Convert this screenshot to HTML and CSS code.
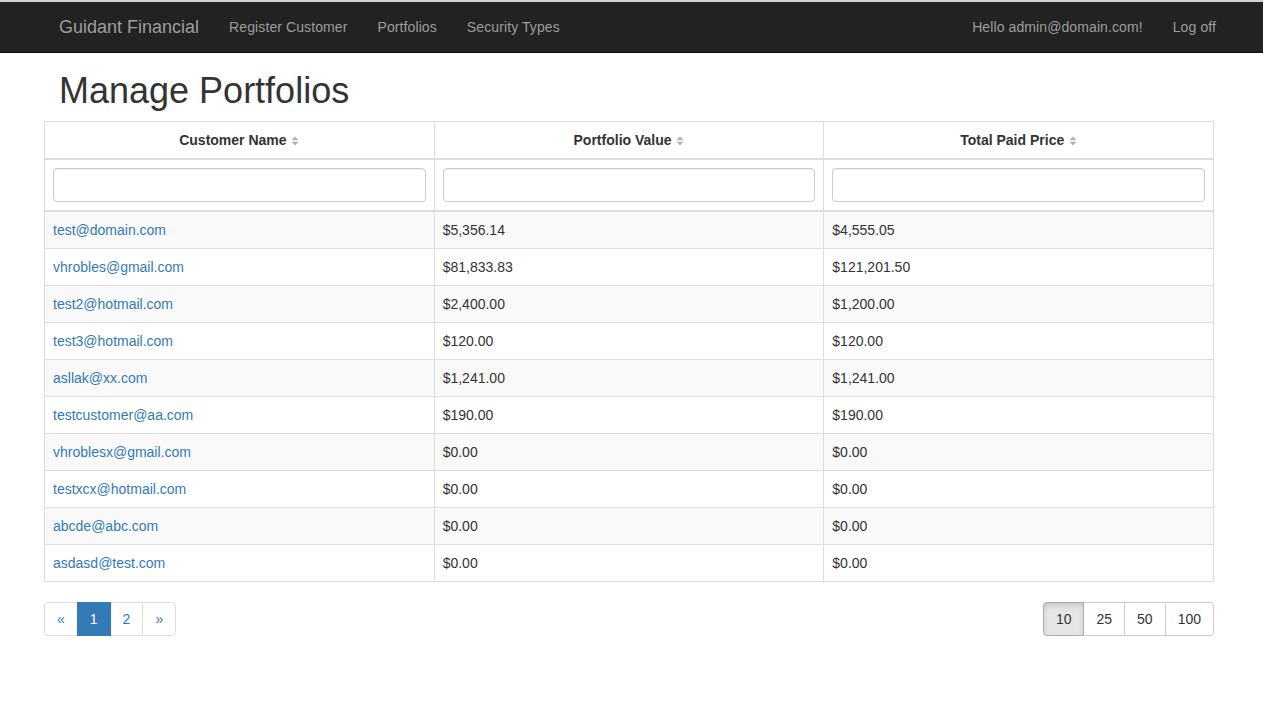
FILE: index.html
```html
<!DOCTYPE html>
<html>
<head>
<meta charset="utf-8">
<title>Manage Portfolios</title>
<link rel="stylesheet" href="styles.css">
</head>
<body>
<nav class="navbar">
  <div class="nav-left">
    <a class="brand" href="#">Guidant Financial</a>
    <a class="nav-link" href="#">Register Customer</a>
    <a class="nav-link" href="#">Portfolios</a>
    <a class="nav-link" href="#">Security Types</a>
  </div>
  <div class="nav-right">
    <a class="nav-link" href="#">Hello admin@domain.com!</a>
    <a class="nav-link" href="#">Log off</a>
  </div>
</nav>
<main class="container">
  <h1 class="title">Manage Portfolios</h1>
  <table class="grid">
    <thead>
      <tr>
        <th>Customer Name <svg class="sort" width="8" height="10" viewBox="0 0 8 10"><path d="M4 0.5 L7.5 4.2 L0.5 4.2 Z M4 9.5 L7.5 5.8 L0.5 5.8 Z" fill="#b3b3b3"/></svg></th>
        <th>Portfolio Value <svg class="sort" width="8" height="10" viewBox="0 0 8 10"><path d="M4 0.5 L7.5 4.2 L0.5 4.2 Z M4 9.5 L7.5 5.8 L0.5 5.8 Z" fill="#b3b3b3"/></svg></th>
        <th>Total Paid Price <svg class="sort" width="8" height="10" viewBox="0 0 8 10"><path d="M4 0.5 L7.5 4.2 L0.5 4.2 Z M4 9.5 L7.5 5.8 L0.5 5.8 Z" fill="#b3b3b3"/></svg></th>
      </tr>
      <tr class="filters">
        <td><input class="form-control" type="text"></td>
        <td><input class="form-control" type="text"></td>
        <td><input class="form-control" type="text"></td>
      </tr>
    </thead>
    <tbody>
      <tr><td><a href="#">test@domain.com</a></td><td>$5,356.14</td><td>$4,555.05</td></tr>
      <tr><td><a href="#">vhrobles@gmail.com</a></td><td>$81,833.83</td><td>$121,201.50</td></tr>
      <tr><td><a href="#">test2@hotmail.com</a></td><td>$2,400.00</td><td>$1,200.00</td></tr>
      <tr><td><a href="#">test3@hotmail.com</a></td><td>$120.00</td><td>$120.00</td></tr>
      <tr><td><a href="#">asllak@xx.com</a></td><td>$1,241.00</td><td>$1,241.00</td></tr>
      <tr><td><a href="#">testcustomer@aa.com</a></td><td>$190.00</td><td>$190.00</td></tr>
      <tr><td><a href="#">vhroblesx@gmail.com</a></td><td>$0.00</td><td>$0.00</td></tr>
      <tr><td><a href="#">testxcx@hotmail.com</a></td><td>$0.00</td><td>$0.00</td></tr>
      <tr><td><a href="#">abcde@abc.com</a></td><td>$0.00</td><td>$0.00</td></tr>
      <tr><td><a href="#">asdasd@test.com</a></td><td>$0.00</td><td>$0.00</td></tr>
    </tbody>
  </table>
  <div class="pager-row">
    <ul class="pagination">
      <li><a href="#">«</a></li>
      <li class="active"><a href="#">1</a></li>
      <li><a href="#">2</a></li>
      <li><a href="#">»</a></li>
    </ul>
    <div class="btn-group">
      <button class="btn active">10</button>
      <button class="btn">25</button>
      <button class="btn">50</button>
      <button class="btn">100</button>
    </div>
  </div>
</main>
</body>
</html>
```

FILE: styles.css
```css
* { box-sizing: border-box; }
html, body { margin: 0; padding: 0; }
body {
  font-family: "Liberation Sans", Arial, Helvetica, sans-serif;
  font-size: 14px;
  line-height: 20px;
  color: #333;
  background: #fff;
  border-top: 2px solid #d2d2d2;
}
a { text-decoration: none; }

.navbar {
  height: 51px;
  background: #222;
  border-bottom: 1px solid #080808;
  display: flex;
  justify-content: space-between;
  padding: 0 32px 0 44px;
}
.nav-left, .nav-right { display: flex; }
.brand {
  font-size: 18px;
  line-height: 20px;
  padding: 15px;
  color: #9d9d9d;
}
.nav-link {
  padding: 15px;
  color: #9d9d9d;
  line-height: 20px;
  letter-spacing: 0.1px;
}

.container {
  width: 1214px;
  padding-left: 44px;
}
.title {
  font-size: 36px;
  font-weight: 500;
  line-height: 40px;
  margin: 18px 0 10px;
  padding-left: 15px;
  color: #333;
}

.grid {
  width: 1170px;
  border-collapse: collapse;
  table-layout: fixed;
  border: 1px solid #ddd;
}
.grid th, .grid td {
  border: 1px solid #ddd;
  padding: 8px;
  line-height: 20px;
  text-align: left;
  vertical-align: top;
}
.grid th {
  text-align: center;
  font-weight: bold;
  border-bottom-width: 2px;
}
.grid .filters td { border-bottom-width: 2px; }
.sort { vertical-align: -1px; margin-left: 1px; }
.grid tbody tr:nth-child(odd) { background: #f9f9f9; }
.grid a { color: #337ab7; }

.form-control {
  display: block;
  width: 100%;
  height: 34px;
  padding: 6px 12px;
  font: inherit;
  border: 1px solid #ccc;
  border-radius: 4px;
  box-shadow: inset 0 1px 1px rgba(0,0,0,.075);
  background: #fff;
}

.pager-row {
  width: 1170px;
  display: flex;
  justify-content: space-between;
  margin-top: 20px;
}
.pagination {
  display: flex;
  list-style: none;
  margin: 0;
  padding: 0;
}
.pagination li a {
  display: block;
  padding: 6px 12px;
  line-height: 20px;
  color: #337ab7;
  border: 1px solid #ddd;
  margin-left: -1px;
  background: #fff;
}
.pagination li:first-child a {
  margin-left: 0;
  border-radius: 4px 0 0 4px;
}
.pagination li:last-child a { border-radius: 0 4px 4px 0; }
.pagination li.active a {
  background: #337ab7;
  border-color: #337ab7;
  color: #fff;
  position: relative;
  z-index: 2;
}

.btn-group { display: flex; }
.btn {
  font: inherit;
  line-height: 20px;
  padding: 6px 12px;
  color: #333;
  background: #fff;
  border: 1px solid #ccc;
  margin-left: -1px;
  border-radius: 0;
}
.btn:first-child { margin-left: 0; border-radius: 4px 0 0 4px; }
.btn:last-child { border-radius: 0 4px 4px 0; }
.btn.active {
  background: #e6e6e6;
  border-color: #adadad;
  box-shadow: inset 0 3px 5px rgba(0,0,0,.125);
  position: relative;
  z-index: 2;
}
```
